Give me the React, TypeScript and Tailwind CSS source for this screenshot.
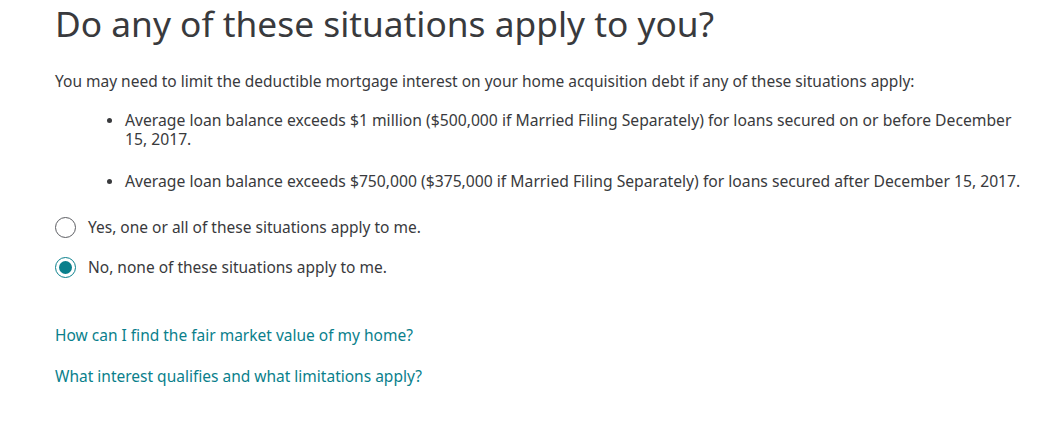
import React, { useState } from "react";

const bullets = [
  <>
    Average loan balance exceeds $1 million ($500,000 if Married Filing Separately) for loans secured on or before December
    <br />
    15, 2017.
  </>,
  <>Average loan balance exceeds $750,000 ($375,000 if Married Filing Separately) for loans secured after December 15, 2017.</>,
];

const options = [
  { id: "yes", label: "Yes, one or all of these situations apply to me." },
  { id: "no", label: "No, none of these situations apply to me." },
];

function Radio({ checked }: { checked: boolean }) {
  return (
    <span
      className={
        checked
          ? "flex h-[21px] w-[21px] shrink-0 items-center justify-center rounded-full border-[1.5px] border-[#0a7f8c]"
          : "flex h-[21px] w-[21px] shrink-0 items-center justify-center rounded-full border-[1.5px] border-[#5c5d62]"
      }
    >
      {checked && <span className="h-[13px] w-[13px] rounded-full bg-[#0a7f8c]" />}
    </span>
  );
}

export default function App() {
  const [choice, setChoice] = useState("no");

  return (
    <main className="min-h-[425px] bg-white pt-[2px] pl-[55px] pr-6 text-[#393a3d] [font-family:'Noto_Sans',Lato,sans-serif]">
      <h1 className="-mt-[1px] text-[35.3px] leading-[45px] font-normal">Do any of these situations apply to you?</h1>

      <p className="mt-[25px] text-[15.5px] leading-[20px]">
        You may need to limit the deductible mortgage interest on your home acquisition debt if any of these situations apply:
      </p>

      <ul className="mt-[20px] flex flex-col gap-[23px] pl-[52px] text-[15.7px] leading-[19px]">
        {bullets.map((b, i) => (
          <li key={i} className="flex items-start gap-[13px]">
            <span className="mt-[7px] h-[5px] w-[5px] shrink-0 rounded-full bg-[#393a3d]" />
            <span>{b}</span>
          </li>
        ))}
      </ul>

      <div className="mt-[26px] flex flex-col gap-[19px]">
        {options.map((o) => (
          <label key={o.id} className="flex cursor-pointer items-center gap-[12px] text-[15.5px] leading-[21px]">
            <input
              type="radio"
              name="situations"
              className="sr-only"
              checked={choice === o.id}
              onChange={() => setChoice(o.id)}
            />
            <Radio checked={choice === o.id} />
            <span>{o.label}</span>
          </label>
        ))}
      </div>

      <div className="mt-[47px] flex flex-col gap-[20px] text-[15.5px] leading-[21px] text-[#0a7f8c]">
        <a href="#" className="w-fit hover:underline">How can I find the fair market value of my home?</a>
        <a href="#" className="w-fit hover:underline">What interest qualifies and what limitations apply?</a>
      </div>
    </main>
  );
}
